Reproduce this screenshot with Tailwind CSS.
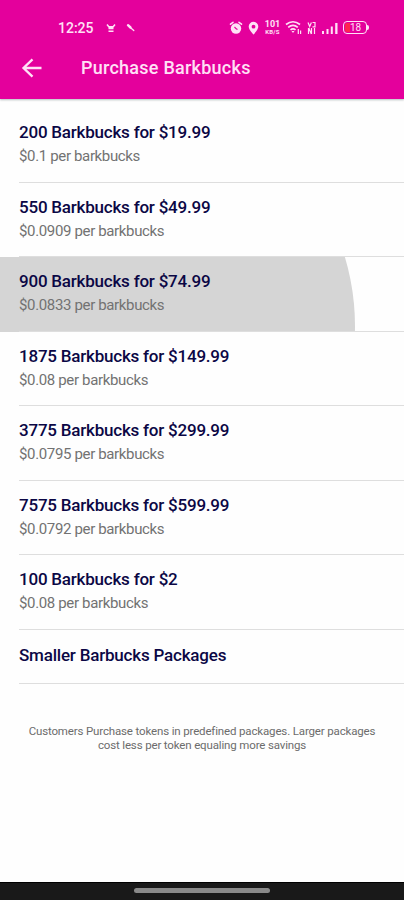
<!DOCTYPE html>
<html lang="en">
<head>
<meta charset="utf-8">
<title>Purchase Barkbucks</title>
<script src="https://cdn.jsdelivr.net/npm/@tailwindcss/browser@4"></script>
</head>
<body class="bg-white font-['Roboto',sans-serif]">
<div class="flex h-[900px] w-[404px] flex-col overflow-hidden bg-[#fefefe]">
  <header class="h-[99px] shrink-0 bg-[#e4009c] text-[#ffe0f6] shadow-[0_1px_2px_rgba(0,40,40,0.3)]">
    <div class="flex h-[44px] items-center pt-[11px] pl-[58px]">
      <span class="w-[35px] text-[14px] leading-4 font-medium whitespace-nowrap">12:25</span>
      <svg class="ml-[13px]" width="10" height="10" viewBox="0 0 10 10" fill="none" stroke="currentColor"><path d="M1 1.500 3 4h4l2-2.500M2.500 5.500h5M2.500 8.300h5" stroke-width="1.500"/><path d="M3 3h4v3H3z" fill="currentColor" stroke="none"/></svg>
      <svg class="ml-[10px]" width="9" height="9" viewBox="0 0 9 9" fill="none" stroke="currentColor" stroke-linecap="round"><path d="M2 2.200 4.500 4.500" stroke-width="2.400"/><path d="M4 4.200 7.800 7.600" stroke-width="1.300"/></svg>
      <svg class="ml-[94px]" width="14" height="14" viewBox="0 0 14 14"><path d="M1.500 3.200 4 1.300M12.500 3.200 10 1.300" stroke="currentColor" stroke-width="1.600" stroke-linecap="round"/><circle cx="7" cy="7.500" r="5.200" fill="currentColor"/><path d="m5.500 6 1.700 1.800 1.300.7" fill="none" stroke="#e4009c" stroke-width="1.200"/></svg>
      <svg class="ml-[5px]" width="11" height="14" viewBox="0 0 11 14"><path fill="currentColor" fill-rule="evenodd" d="M5.500.8a4.800 4.800 0 0 0-4.800 4.800c0 3.300 4.800 7.900 4.800 7.900s4.800-4.600 4.800-7.900A4.800 4.800 0 0 0 5.500.8Zm0 3a1.900 1.900 0 1 1 0 3.800 1.900 1.900 0 0 1 0-3.800Z"/></svg>
      <div class="ml-[5px] flex w-[17px] flex-col items-center font-bold"><span class="text-[9px] leading-[8px]">101</span><span class="text-[6px] leading-[7px] tracking-[0.200px]">KB/S</span></div>
      <svg class="ml-[4px]" width="18" height="15" viewBox="0 0 18 15" fill="none" stroke="currentColor" stroke-width="1.700"><path d="M1 4.500Q8 -1 15 4.500M3.200 7.300Q8 3.300 12.800 7.300M5.500 9.800Q8 7.800 10.500 9.800"/><path d="m6.500 11 1.500 2 1.500-2Z" fill="currentColor" stroke="none"/><path d="M13.300 9v5M15.600 10.500V14" stroke-width="1.200"/></svg>
      <svg class="ml-[4px]" width="10" height="14" viewBox="0 0 10 14" fill="none" stroke="currentColor" stroke-width="1.200"><path d="m1 1.500 1.700 4 1.700-4M5.500 1.500H8v4.300H5.500M1.500 7V13M4.500 7V13M1.800 7l2.500 6M7.500 7V13"/></svg>
      <svg class="ml-[4px]" width="18" height="14" viewBox="0 0 18 14" fill="currentColor"><path d="M1 10h2v3H1zM5.500 8h2v5h-2zM9.800 5.500h2V13h-2zM14.200 2h2.300v11h-2.300z"/></svg>
      <div class="ml-[4px] flex items-center">
        <div class="flex h-[13px] w-[24px] rounded-[4px] border border-current p-[1px]"><span class="w-[5px] rounded-l-[2px] bg-[#ff244e]"></span><span class="text-[10px] leading-[9px]">18</span></div>
        <span class="h-[5px] w-[2px] rounded-r-full bg-current"></span>
      </div>
    </div>
    <div class="flex h-[48px] items-center pl-[20px]">
      <svg width="24" height="24" viewBox="0 0 24 24" fill="none" stroke="currentColor" stroke-width="2.300"><path d="M21.500 12H3.500M12.500 3.300 3.500 12l9 8.700"/></svg>
      <h1 class="ml-[37px] text-[18px] leading-6 font-medium tracking-[0.250px] whitespace-nowrap">Purchase Barkbucks</h1>
    </div>
  </header>

  <main class="grow pt-[9px] text-[#0b0745]">
    <ul id="packages"></ul>
    <div class="ml-[19px] h-[54px] border-b border-[#dedede] pt-[13.500px]"><p class="text-[17px] leading-6 font-medium tracking-[-0.2px] whitespace-nowrap">Smaller Barbucks Packages</p></div>
    <p class="mt-[40px] text-center text-[11.500px] leading-[14.500px] tracking-[-0.150px] text-[#6c6c6c]">Customers Purchase tokens in predefined packages. Larger packages<br>cost less per token equaling more savings</p>
  </main>

  <footer class="flex h-[18px] shrink-0 justify-center border-t border-black bg-[#191919] pt-[5px]"><span class="h-[5px] w-[136px] rounded-full bg-[#898989]"></span></footer>
</div>
<template id="row">
  <li class="relative h-[74.500px] overflow-hidden pl-[19px]">
    <div class="relative z-10 h-full border-b border-[#dedede] pt-[12px]">
      <p class="name text-[17px] leading-6 font-medium tracking-[-0.220px] whitespace-nowrap"></p>
      <p class="rate text-[15px] leading-[25px] tracking-[-0.350px] whitespace-nowrap text-[#727272]"></p>
    </div>
  </li>
</template>
<template id="ripple"><span class="absolute top-[-171px] left-[-125px] size-[480px] rounded-full bg-[#d5d5d5]"></span></template>
<script>
const packages = [
  ["200 Barkbucks for $19.99", "$0.1"],
  ["550 Barkbucks for $49.99", "$0.0909"],
  ["900 Barkbucks for $74.99", "$0.0833", true],
  ["1875 Barkbucks for $149.99", "$0.08"],
  ["3775 Barkbucks for $299.99", "$0.0795"],
  ["7575 Barkbucks for $599.99", "$0.0792"],
  ["100 Barkbucks for $2", "$0.08"]
];
const list = document.getElementById("packages");
for (const [name, rate, pressed] of packages) {
  const li = document.getElementById("row").content.firstElementChild.cloneNode(true);
  li.querySelector(".name").textContent = name;
  li.querySelector(".rate").textContent = rate + " per barkbucks";
  if (pressed) li.prepend(document.getElementById("ripple").content.cloneNode(true));
  list.append(li);
}
</script>
</body>
</html>
